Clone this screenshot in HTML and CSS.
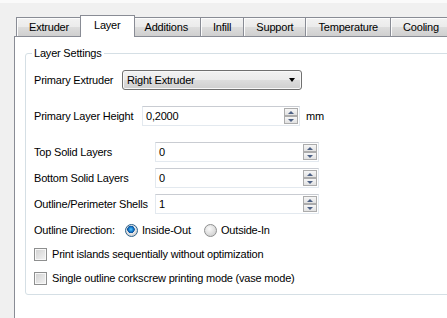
FILE: index.html
```html
<html>
<head>
<link rel="stylesheet" href="styles.css">
</head>
<body>
	<div class="tabs">
		<div class="tab">Extruder</div>
		<div class="tab tab-active">Layer</div>
		<div class="tab">Additions</div>
		<div class="tab">Infill</div>
		<div class="tab">Support</div>
		<div class="tab">Temperature</div>
		<div class="tab">Cooling</div>
	</div>
	<div class="panel">
		<fieldset class="group">
			<legend>Layer Settings</legend>

			<div class="row row-extruder">
				<span class="label">Primary Extruder</span>
				<div class="combo">
					<span>Right Extruder</span>
					<i class="combo-arrow"></i>
				</div>
			</div>

			<div class="row row-height">
				<span class="label">Primary Layer Height</span>
				<div class="spin spin-height">
					<span class="spin-value">0,2000</span>
					<div class="spin-buttons"><b class="spin-up"></b><b class="spin-down"></b></div>
				</div>
				<span class="unit">mm</span>
			</div>

			<div class="form">
				<span class="label">Top Solid Layers</span>
				<div class="spin">
					<span class="spin-value">0</span>
					<div class="spin-buttons"><b class="spin-up"></b><b class="spin-down"></b></div>
				</div>
				<span class="label">Bottom Solid Layers</span>
				<div class="spin">
					<span class="spin-value">0</span>
					<div class="spin-buttons"><b class="spin-up"></b><b class="spin-down"></b></div>
				</div>
				<span class="label">Outline/Perimeter Shells</span>
				<div class="spin">
					<span class="spin-value">1</span>
					<div class="spin-buttons"><b class="spin-up"></b><b class="spin-down"></b></div>
				</div>
			</div>

			<div class="row row-direction">
				<span class="label">Outline Direction:</span>
				<span class="option"><i class="radio radio-on"></i>Inside-Out</span>
				<span class="option"><i class="radio"></i>Outside-In</span>
			</div>

			<div class="check-row"><i class="check"></i>Print islands sequentially without optimization</div>
			<div class="check-row"><i class="check"></i>Single outline corkscrew printing mode (vase mode)</div>
		</fieldset>
	</div>
</body>
</html>
```

FILE: styles.css
```css
	body{
		margin: 0;
		width: 447px;
		height: 318px;
		overflow: hidden;
		background: linear-gradient(#fafafa 0, #fafafa 3px, #f0f0f0 3px);
		font-family: "Liberation Sans", Arial, sans-serif;
		font-size: 11px;
		line-height: 13px;
		letter-spacing: -0.2px;
		color: #000;
	}

	/* вкладки */
	.tabs {
		display: flex;
		align-items: flex-end;
		height: 36px;
		padding-left: 16px;
		box-sizing: border-box;
		white-space: nowrap;
	}
	.tab {
		height: 19px;
		padding: 0 12px;
		box-sizing: border-box;
		border: 1px solid #898c95;
		border-bottom: none;
		border-left-width: 0;
		background: linear-gradient(#f2f2f2, #ebebeb 50%, #dddddd 50%, #cfcfcf);
		box-shadow: inset 1px 1px 0 #fcfcfc;
		display: flex;
		align-items: center;
	}
	.tab:first-child {
		border-left-width: 1px;
	}
	.tab-active {
		position: relative;
		z-index: 1;
		height: 22px;
		margin: 0 -2px -1px -2px;
		padding: 0 13px 2px;
		border-left-width: 1px;
		background: #fff;
		box-shadow: none;
	}

	/* панель */
	.panel {
		margin-left: 14px;
		width: 460px;
		height: 300px;
		border: 1px solid #898c95;
		background: #fff;
		overflow: hidden;
	}

	.group {
		margin: 10px 0 0 10px;
		padding: 10px 8px 8px 8px;
		border: 1px solid #d5dfe5;
		border-radius: 3px;
	}
	.group legend {
		padding: 0 2px;
		margin-left: -2px;
	}

	.row {
		display: flex;
		align-items: center;
		height: 20px;
	}
	.row-extruder .label {
		width: 88px;
	}
	.row-height {
		margin-top: 16px;
	}
	.row-height .label {
		width: 108px;
	}

	/* выпадающий список */
	.combo {
		width: 180px;
		height: 20px;
		box-sizing: border-box;
		border: 1px solid #707070;
		border-radius: 3px;
		background: linear-gradient(#f2f2f2, #ebebeb 50%, #dddddd 50%, #cfcfcf);
		box-shadow: inset 0 0 0 1px #f8f8f8;
		padding-left: 4px;
		display: flex;
		align-items: center;
		justify-content: space-between;
	}
	.combo-arrow {
		margin-right: 6px;
		border-left: 3.5px solid transparent;
		border-right: 3.5px solid transparent;
		border-top: 4px solid #000;
	}

	/* поле со стрелками */
	.spin {
		width: 164px;
		height: 20px;
		box-sizing: border-box;
		border: 1px solid #e3e9ef;
		border-top-color: #c9ccd2;
		background: #fff;
		display: flex;
		align-items: center;
		justify-content: space-between;
		padding-left: 3px;
	}
	.spin-height {
		width: 158px;
	}
	.spin-buttons {
		display: flex;
		flex-direction: column;
		margin-right: 1px;
	}
	.spin-buttons b {
		width: 14px;
		height: 8px;
		box-sizing: border-box;
		border: 1px solid #acacac;
		background: linear-gradient(#f6f6f6, #e2e2e2);
		display: flex;
		align-items: center;
		justify-content: center;
	}
	.spin-up::after {
		content: "";
		border-left: 3px solid transparent;
		border-right: 3px solid transparent;
		border-bottom: 3px solid #4d6185;
	}
	.spin-down::after {
		content: "";
		border-left: 3px solid transparent;
		border-right: 3px solid transparent;
		border-top: 3px solid #4d6185;
	}
	.unit {
		margin-left: 6px;
	}

	.form {
		margin-top: 16px;
		display: grid;
		grid-template-columns: 114px auto;
		column-gap: 7px;
		row-gap: 6px;
		align-items: center;
		justify-content: start;
	}

	/* переключатели */
	.row-direction {
		margin-top: 8px;
		height: 16px;
	}
	.row-direction .label {
		width: 91px;
	}
	.option {
		width: 79px;
		display: flex;
		align-items: center;
		gap: 4px;
	}
	.radio {
		width: 13px;
		height: 13px;
		box-sizing: border-box;
		border-radius: 50%;
		border: 1px solid #8e8f8f;
		background: radial-gradient(circle at 40% 35%, #fafafa, #d6d6d6 70%, #c4c4c4);
	}
	.radio-on {
		border-color: #2c628b;
		background: radial-gradient(circle at 45% 40%, #5fc6ff 0, #1a84d2 2px, #0b4f9a 3.5px, #e9e9e9 4px, #d4d4d4 6px);
	}

	.check-row {
		margin-top: 8px;
		height: 16px;
		display: flex;
		align-items: center;
		gap: 5px;
	}
	.check-row + .check-row {
		margin-top: 8px;
	}
	.check {
		width: 13px;
		height: 13px;
		box-sizing: border-box;
		border: 1px solid #8e8f8f;
		background: linear-gradient(135deg, #d0d0d0, #f4f4f4);
		box-shadow: inset 0 0 0 1px #f8f8f8;
	}
```
